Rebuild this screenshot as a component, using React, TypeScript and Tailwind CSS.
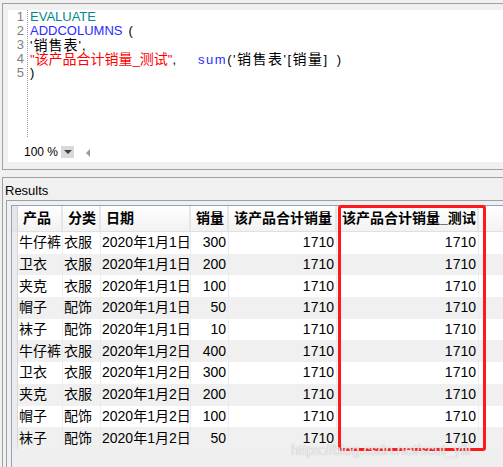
const rows = [
  ["牛仔裤", "衣服", "2020年1月1日", "300"],
  ["卫衣", "衣服", "2020年1月1日", "200"],
  ["夹克", "衣服", "2020年1月1日", "100"],
  ["帽子", "配饰", "2020年1月1日", "50"],
  ["袜子", "配饰", "2020年1月1日", "10"],
  ["牛仔裤", "衣服", "2020年1月2日", "400"],
  ["卫衣", "衣服", "2020年1月2日", "300"],
  ["夹克", "衣服", "2020年1月2日", "200"],
  ["帽子", "配饰", "2020年1月2日", "100"],
  ["袜子", "配饰", "2020年1月2日", "50"],
];

const headers = [
  { label: "产品", w: "w-[45px]" },
  { label: "分类", w: "w-[38px]" },
  { label: "日期", w: "w-[90px]" },
  { label: "销量", w: "w-[38px]" },
  { label: "该产品合计销量", w: "w-[108px]" },
  { label: "该产品合计销量_测试", w: "w-[142px]" },
];

// CJK runs in the editor are drawn a little larger than the latin text
function Cjk({ children }: { children: string }) {
  return <span className="text-[14px] leading-[14px]">{children}</span>;
}

function Editor() {
  return (
    <div className="ml-[2px] mt-[3px] h-[167px] border-t border-l border-b border-[#a0a0a0] pt-[6px] pl-[5px] pb-[7px] flex flex-col">
      <div className="flex-1 bg-white flex flex-col">
        <div className="flex h-[127px] text-[13px] leading-[14px]">
          <div className="w-[20px] border-r border-dotted border-[#a0a0a0] text-right pr-[3px] text-[#808080]">
            <div className="h-[14px]">1</div>
            <div className="h-[14px]">2</div>
            <div className="h-[14px]">3</div>
            <div className="h-[14px]">4</div>
            <div className="h-[14px]">5</div>
          </div>
          <div className="pl-[2px] text-black whitespace-pre">
            <div className="h-[14px] text-[#008b8b]">EVALUATE</div>
            <div className="h-[14px]">
              <span className="text-[#2b2bff]">ADDCOLUMNS</span>
              <span className="ml-[6px]">(</span>
            </div>
            <div className="h-[14px] tracking-[1px]">
              '<Cjk>销售表</Cjk>',
            </div>
            <div className="h-[14px]">
              <span className="text-[#ff0000]">
                "<Cjk>该产品合计销量</Cjk>_<Cjk>测试</Cjk>"
              </span>
              ,
              <span className="ml-[22px] tracking-[1.5px]">
                <span className="text-[#2b2bff]">sum</span>('<Cjk>销售表</Cjk>'[<Cjk>销量</Cjk>]
              </span>
              <span className="ml-[8px]">)</span>
            </div>
            <div className="h-[14px]">)</div>
          </div>
        </div>
        <div className="flex-1 flex items-center pt-[4px] pl-[16px] text-[12px] text-black">
          <span>100 %</span>
          <div className="ml-[3px] w-[13px] h-[12px] bg-[#d9d9d9] flex items-center justify-center">
            <div className="w-0 h-0 border-x-[4px] border-x-transparent border-t-[4px] border-t-[#404040]" />
          </div>
          <div className="ml-[12px] mt-[2px] w-0 h-0 border-y-[4px] border-y-transparent border-r-[4px] border-r-[#9a9a9a]" />
        </div>
      </div>
    </div>
  );
}

function Grid() {
  return (
    <div className="ml-[3px] flex-1 border-t border-l border-[#a0a0a0] pt-[4px] pl-[4px] flex flex-col">
      <div className="flex-1 border-t border-l border-[#8fa3bf] bg-[#efefef] flex flex-col">
        <div className="flex h-[26px] bg-gradient-to-b from-white to-[#f2f2f2] border-b border-[#e0e0e0] font-bold text-[14px]">
          <div className="w-[6px] shrink-0 bg-[#e6e6e6] border-r border-[#d0d0d0]" />
          {headers.map((h) => (
            <div key={h.label} className={`${h.w} shrink-0 border-r-2 border-[#e6e6e6] pl-[5px] flex items-center whitespace-nowrap`}>
              {h.label}
            </div>
          ))}
          <div className="flex-1" />
        </div>
        {rows.map((r, i) => (
          <div key={i} className={`flex h-[21.7px] text-[14px] ${i % 2 === 1 ? "bg-[#f0f0f0]" : "bg-white"}`}>
            <div className="w-[6px] shrink-0 bg-[#ebebeb] border-r border-[#d8d8d8]" />
            <div className="w-[45px] shrink-0 pl-[1px] border-r border-[#ececec] flex items-center whitespace-nowrap">{r[0]}</div>
            <div className="w-[38px] shrink-0 pl-[1px] border-r border-[#ececec] flex items-center">{r[1]}</div>
            <div className="w-[90px] shrink-0 pl-[1px] border-r border-[#ececec] flex items-center whitespace-nowrap">{r[2]}</div>
            <div className="w-[38px] shrink-0 pr-[2px] border-r border-[#ececec] flex items-center justify-end">{r[3]}</div>
            <div className="w-[108px] shrink-0 pr-[2px] border-r border-[#ececec] flex items-center justify-end">1710</div>
            <div className="w-[142px] shrink-0 pr-[2px] border-r border-[#ececec] flex items-center justify-end">1710</div>
            <div className="flex-1" />
          </div>
        ))}
      </div>
    </div>
  );
}

export default function App() {
  return (
    <div className="relative w-[503px] h-[467px] overflow-hidden bg-[#f0f0f0] text-black font-['Liberation_Sans','Noto_Sans_CJK_SC',sans-serif]">
      <Editor />
      <div className="mt-[7px] ml-[2px] h-[290px] border-t border-l border-[#a0a0a0] flex flex-col">
        <div className="h-[22px] pt-[5px] ml-[2px] text-[13px] leading-[15px]">Results</div>
        <Grid />
      </div>

      {/* annotation box */}
      <div className="absolute left-[338px] top-[205px] w-[148px] h-[246px] border-[3px] border-[#ff1a1a] rounded-[3px]" />
      <div className="absolute left-[291px] top-[440px] text-[14px] text-white/80 [text-shadow:0_0_1px_#9a9a9a] whitespace-nowrap">
        https://blog.csdn.net/scut_yfli
      </div>
    </div>
  );
}
